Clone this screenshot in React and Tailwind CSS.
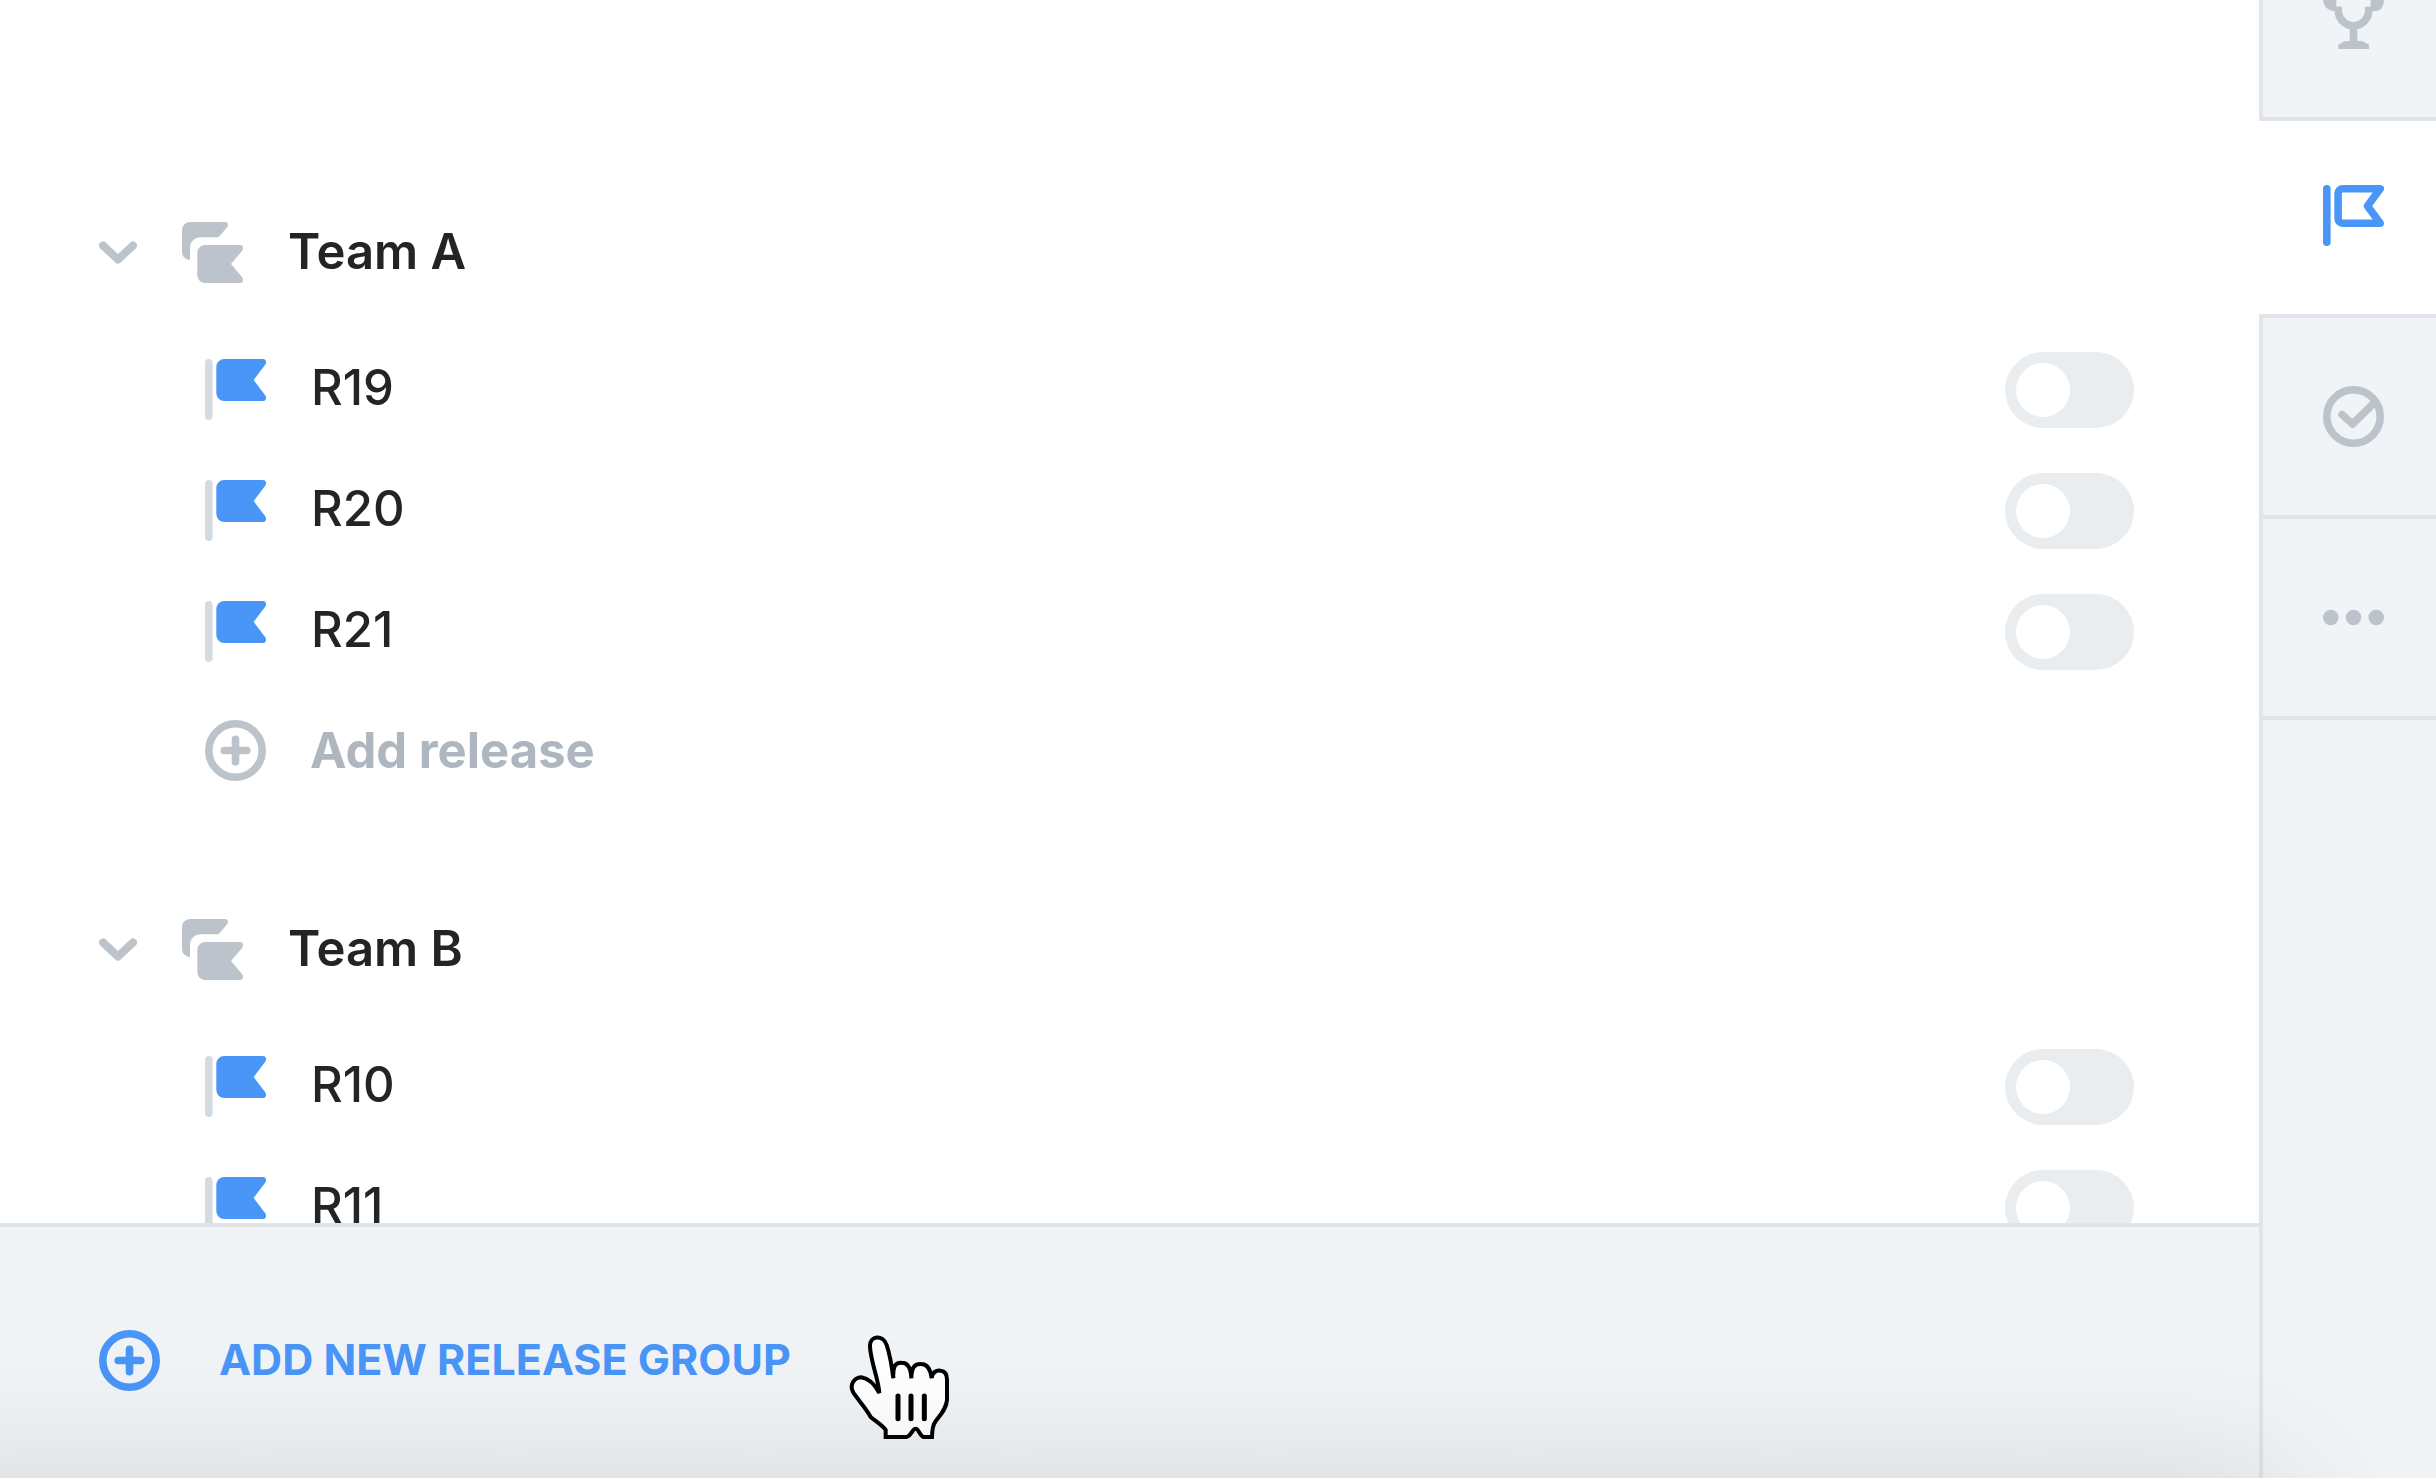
import React, { useState } from 'react'

const groups = [
  { name: 'Team A', releases: ['R19', 'R20', 'R21'], canAdd: true },
  { name: 'Team B', releases: ['R10', 'R11'], canAdd: false },
]

/* ───── Icons ───── */

function ChevronIcon() {
  return (
    <svg viewBox="0 0 38 24" className="w-[38px] h-6 shrink-0" fill="none" aria-hidden="true">
      <path d="M4 4.5 19 18.5 34 4.5" stroke="currentColor" strokeWidth="8" strokeLinecap="round" strokeLinejoin="round" />
    </svg>
  )
}

function GroupIcon() {
  return (
    <svg viewBox="0 0 61 61" className="size-[61px] shrink-0" fill="currentColor" aria-hidden="true">
      <path d="M8 0H43C46 0 47 3 45 5.5L36.5 15.3H19C12.5 15.3 8 20 8 26V38C3 37.5 0 34 0 30V8A8 8 0 0 1 8 0Z" />
      <path d="M23.3 23H58C61 23 62 26 60 29L49 42 60 55C62 58 61 61 58 61H23.3A8 8 0 0 1 15.3 53V31A8 8 0 0 1 23.3 23Z" />
    </svg>
  )
}

function ReleaseIcon() {
  return (
    <svg viewBox="0 0 61 61" className="size-[61px] shrink-0" aria-hidden="true">
      <rect width="7.6" height="61" rx="3.8" fill="#d5dce1" />
      <path fill="#4a95f8" d="M19.3 0H58C61 0 62 3.5 60 6L48.7 21 60 36C62 38.5 61 42 58 42H19.3A8 8 0 0 1 11.3 34V8A8 8 0 0 1 19.3 0Z" />
    </svg>
  )
}

function PlusIcon() {
  return (
    <svg viewBox="0 0 61 61" className="size-[61px] shrink-0" fill="none" stroke="currentColor" strokeWidth="7.6" strokeLinecap="round" aria-hidden="true">
      <circle cx="30.5" cy="30.5" r="26.7" />
      <path d="M30.5 19.2V41.8M19.2 30.5H41.8" />
    </svg>
  )
}

function TrophyIcon() {
  return (
    <svg viewBox="0 0 61 61" className="size-[61px]" fill="none" stroke="currentColor" strokeWidth="7.6" aria-hidden="true">
      <path d="M17 3.8H44" />
      <path d="M15.3 18.7V22.5A15.2 15.2 0 0 0 45.7 22.5V18.7" />
      <path d="M0 8H13.3V18.7H17V23H12C5 23 0 18 0 11ZM61 8H47.7V18.7H44V23H53C58 23 61 18 61 11Z" fill="currentColor" stroke="none" />
      <path d="M30.5 38V56" />
      <path d="M15.3 61V57.5Q15.3 55.5 17.5 55.5 20 53 23 53H38Q41 53 43.5 55.5 46 55.5 46 57.5V61Z" fill="currentColor" stroke="none" />
    </svg>
  )
}

function FlagIcon() {
  return (
    <svg viewBox="0 0 61 61" className="size-[61px]" fill="none" stroke="currentColor" strokeWidth="7.6" strokeLinecap="round" strokeLinejoin="round" aria-hidden="true">
      <path d="M3.8 3.8V57.2" />
      <path d="M57.2 3.8H19.6A4.5 4.5 0 0 0 15.1 8.3V33.7A4.5 4.5 0 0 0 19.6 38.2H57.2L44.5 21Z" />
    </svg>
  )
}

function CheckIcon() {
  return (
    <svg viewBox="0 0 61 61" className="size-[61px]" fill="none" stroke="currentColor" strokeWidth="7.6" strokeLinecap="round" strokeLinejoin="round" aria-hidden="true">
      <circle cx="30.5" cy="30.5" r="26.7" />
      <path d="M19 28.5 29.5 38 50 18" />
    </svg>
  )
}

function DotsIcon() {
  return (
    <svg viewBox="0 0 61 61" className="size-[61px]" fill="currentColor" aria-hidden="true">
      <circle cx="7.8" cy="30.5" r="7.8" />
      <circle cx="30.5" cy="30.5" r="7.8" />
      <circle cx="53.2" cy="30.5" r="7.8" />
    </svg>
  )
}

function PointerIcon() {
  return (
    <svg
      viewBox="24 27 306 318"
      className="absolute left-[848px] top-[107px] w-[102px] h-[106px] pointer-events-none"
      fill="white"
      stroke="black"
      strokeWidth="12"
      strokeLinecap="round"
      aria-hidden="true"
    >
      <path d="M137 336V315C125 298 105 288 92 276 78 250 57 228 40 203 27 180 42 158 64 157 85 160 105 180 118 204 115 160 92 110 90 65 88 30 130 28 140 60 150 90 155 120 160 160 158 125 165 112 185 113 205 113 213 130 214 160 214 130 222 116 243 117 262 117 272 135 275 160 275 142 290 135 302 137 316 138 321 150 321 165V225C318 255 300 270 286 290 276 303 277 320 276 336H250C238 330 236 311 227 311 217 311 216 330 200 336Z" />
      <path d="M174 213V281M213 213V281M253 213V281" strokeWidth="15" />
    </svg>
  )
}

/* ───── Release list ───── */

function ReleaseRow({ name }) {
  const [enabled, setEnabled] = useState(false)
  const id = `release-${name}`

  return (
    <li className="flex items-center h-[121px] pl-[205px] pr-[125px]">
      <ReleaseIcon />
      <label htmlFor={id} className="flex-1 pl-[45px] pb-1 text-[49px] leading-[60px] font-medium">
        {name}
      </label>
      <input
        id={id}
        type="checkbox"
        role="switch"
        checked={enabled}
        onChange={() => setEnabled(!enabled)}
        className="appearance-none flex items-center w-[129px] h-[76px] px-[11px] rounded-full bg-[#e9edf0] checked:bg-[#4a95f8] checked:justify-end before:size-[54px] before:rounded-full before:bg-white"
      />
    </li>
  )
}

function ReleaseGroup({ name, releases, canAdd }) {
  const [open, setOpen] = useState(true)

  return (
    <section className="pb-[60px]">
      <h2>
        <button
          type="button"
          aria-expanded={open}
          onClick={() => setOpen(!open)}
          className="flex items-center w-full h-[153px] pl-[99px] gap-[45px] text-[#bcc3cb]"
        >
          <ChevronIcon />
          <GroupIcon />
          <span className="pb-0.5 text-[49px] leading-[60px] font-semibold text-[#222426]">{name}</span>
        </button>
      </h2>
      {open && (
        <ul>
          {releases.map((release) => (
            <ReleaseRow key={release} name={release} />
          ))}
        </ul>
      )}
      {open && canAdd && (
        <button type="button" className="flex items-center gap-11 w-full h-[121px] pl-[205px] pb-1 text-[#bcc3cb]">
          <PlusIcon />
          <span className="text-[49px] leading-[60px] font-bold text-[#aeb7c0]">Add release</span>
        </button>
      )}
    </section>
  )
}

/* ───── Side rail ───── */

const tabs = [
  { id: 'goals', label: 'Goals', Icon: TrophyIcon },
  { id: 'releases', label: 'Releases', Icon: FlagIcon },
  { id: 'tasks', label: 'Tasks', Icon: CheckIcon },
  { id: 'more', label: 'More', Icon: DotsIcon },
]

function SideRail() {
  const [active, setActive] = useState('releases')

  return (
    <nav className="flex flex-col w-[177px] shrink-0">
      <div className="-mt-20">
        {tabs.map(({ id, label, Icon }) => (
          <button
            key={id}
            type="button"
            aria-label={label}
            onClick={() => setActive(id)}
            className={`flex items-center justify-center w-full border-b-4 border-[#e1e5e9] pl-3 ${
              active === id
                ? 'h-[197px] pb-1 bg-white text-[#4a95f8]'
                : 'h-[201px] bg-[#f0f4f7] text-[#bcc3cb] shadow-[inset_4px_0_0_#e1e5e9]'
            }`}
          >
            <Icon />
          </button>
        ))}
      </div>
      <div className="flex-1 bg-[#f0f4f7] border-l-4 border-[#e1e5e9]" />
    </nav>
  )
}

export default function App() {
  return (
    <div className="relative flex h-screen overflow-hidden bg-white font-['Inter',sans-serif] text-[#222426]">
      <div className="flex flex-col flex-1 min-w-0">
        <main className="flex-1 min-h-0 overflow-hidden pt-44">
          {groups.map((group) => (
            <ReleaseGroup key={group.name} {...group} />
          ))}
        </main>
        <footer className="relative h-[255px] shrink-0 border-t-4 border-[#e1e5e9] bg-[#f0f4f7]">
          <button type="button" className="flex items-center gap-[59px] h-[267px] pl-[99px] text-[#4a95f8]">
            <PlusIcon />
            <span className="pb-1 text-[43px] leading-[60px] font-bold">ADD NEW RELEASE GROUP</span>
          </button>
          <PointerIcon />
        </footer>
      </div>
      <SideRail />

      {/* Shadow cast upwards by the panel below the fold */}
      <div className="absolute top-full -left-60 right-36 h-80 pointer-events-none shadow-[0_0_150px_rgba(0,0,0,0.13)]" />
    </div>
  )
}
